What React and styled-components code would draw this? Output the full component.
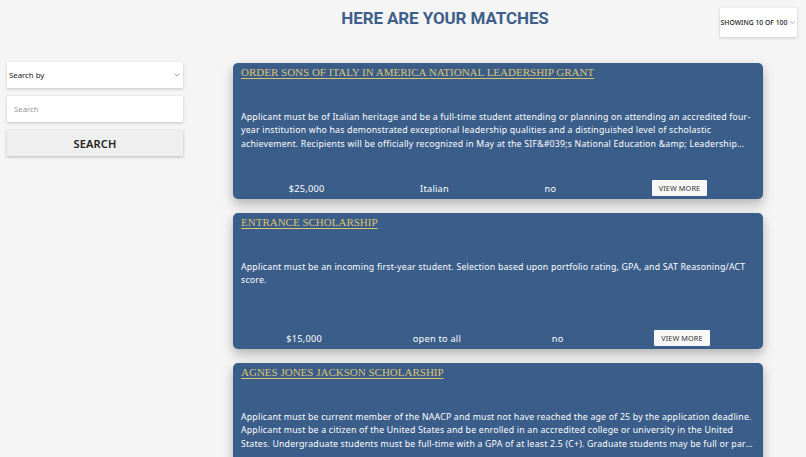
import { styled, createGlobalStyle } from "styled-components";
import { ChevronDown } from "lucide-react";

const scholarships = [
  {
    name: "ORDER SONS OF ITALY IN AMERICA NATIONAL LEADERSHIP GRANT",
    description:
      "Applicant must be of Italian heritage and be a full-time student attending or planning on attending an accredited four-year institution who has demonstrated exceptional leadership qualities and a distinguished level of scholastic achievement. Recipients will be officially recognized in May at the SIF&#039;s National Education &amp; Leadership Awards Gala in Washington, DC.",
    amount: "$25,000",
    ethnicity: "Italian",
    essay: "no",
  },
  {
    name: "ENTRANCE SCHOLARSHIP",
    description:
      "Applicant must be an incoming first-year student. Selection based upon portfolio rating, GPA, and SAT Reasoning/ACT score.",
    amount: "$15,000",
    ethnicity: "open to all",
    essay: "no",
  },
  {
    name: "AGNES JONES JACKSON SCHOLARSHIP",
    description:
      "Applicant must be current member of the NAACP and must not have reached the age of 25 by the application deadline. Applicant must be a citizen of the United States and be enrolled in an accredited college or university in the United States. Undergraduate students must be full-time with a GPA of at least 2.5 (C+). Graduate students may be full or part-time with a GPA of at least 3.0 (B).",
    amount: "$1,500",
    ethnicity: "open to all",
    essay: "yes",
  },
];

const GlobalStyle = createGlobalStyle`
  * { box-sizing: border-box; }
  body {
    margin: 0;
    background: #f5f5f5;
    font-family: "Noto Sans", "Open Sans", sans-serif;
    overflow: hidden;
  }
`;

const App = () => {
  return (
    <>
      <GlobalStyle />
      <Page>
        <Header>
          <div />
          <Title>HERE ARE YOUR MATCHES</Title>
          <ShowingBox>
            <span>SHOWING 10 OF 100</span>
            <ChevronDown size={7} strokeWidth={2} />
          </ShowingBox>
        </Header>
        <Body>
          <Sidebar>
            <SelectBox>
              <span>Search by</span>
              <ChevronDown size={8} strokeWidth={2} />
            </SelectBox>
            <SearchInput type="text" placeholder="Search" />
            <SearchButton>SEARCH</SearchButton>
          </Sidebar>
          <Results>
            {scholarships.map((s) => (
              <Card key={s.name}>
                <CardTitle href="#">{s.name}</CardTitle>
                <Description>{s.description}</Description>
                <CardFooter>
                  <span>{s.amount}</span>
                  <span>{s.ethnicity}</span>
                  <span>{s.essay}</span>
                  <ViewMore>VIEW MORE</ViewMore>
                </CardFooter>
              </Card>
            ))}
          </Results>
        </Body>
      </Page>
    </>
  );
};

export default App;

const Page = styled.div`
  width: 100%;
  min-height: 100vh;
`;

const Header = styled.div`
  display: grid;
  grid-template-columns: 190px 1fr 106px;
  align-items: start;
  height: 62px;
`;

const Title = styled.h1`
  margin: 7px 0 0;
  text-align: center;
  font-family: Roboto, "Liberation Sans", sans-serif;
  font-weight: 700;
  font-size: 17px;
  letter-spacing: -0.1px;
  line-height: 22px;
  color: #3e5f8a;
`;

const ShowingBox = styled.div`
  margin: 8px 0 0 20px;
  width: 77px;
  height: 29px;
  background: #ffffff;
  box-shadow: 0 1px 3px rgba(0, 0, 0, 0.18);
  display: flex;
  align-items: center;
  justify-content: center;
  gap: 2px;
  font-size: 6.8px;
  color: #222;
  font-weight: 500;
  & > svg {
    color: #666;
  }
`;

const Body = styled.div`
  display: grid;
  grid-template-columns: 190px 1fr;
`;

const Sidebar = styled.div`
  padding: 0 7px;
  display: flex;
  flex-direction: column;
  gap: 8px;
`;

const SelectBox = styled.div`
  height: 26px;
  background: #ffffff;
  box-shadow: 0 1px 3px rgba(0, 0, 0, 0.2);
  display: flex;
  align-items: center;
  justify-content: space-between;
  padding: 0 2px;
  font-size: 7.8px;
  color: #222;
  & > svg {
    color: #777;
  }
`;

const SearchInput = styled.input`
  height: 26px;
  border: none;
  outline: none;
  background: #ffffff;
  box-shadow: 0 1px 3px rgba(0, 0, 0, 0.2);
  padding: 0 7px;
  font-family: inherit;
  font-size: 7.8px;
  &::placeholder {
    color: #999;
  }
`;

const SearchButton = styled.button`
  height: 26px;
  border: none;
  background: #efefef;
  box-shadow: 0 1px 3px rgba(0, 0, 0, 0.25);
  font-family: inherit;
  font-weight: 600;
  font-size: 11px;
  color: #222;
  letter-spacing: 0.2px;
`;

const Results = styled.div`
  display: flex;
  flex-direction: column;
  align-items: center;
  gap: 14px;
  padding-top: 1px;
`;

const Card = styled.div`
  width: 530px;
  height: 136px;
  flex-shrink: 0;
  background: #3a5d8a;
  border-radius: 5px;
  box-shadow: 0 5px 12px rgba(0, 0, 0, 0.28);
  padding: 2px 8px 2px;
  display: flex;
  flex-direction: column;
  color: #ffffff;
`;

const CardTitle = styled.a`
  font-family: "Liberation Serif", "DejaVu Serif", serif;
  font-size: 11px;
  line-height: 14px;
  color: #dcc46f;
  text-decoration: underline;
  text-underline-offset: 1.5px;
  align-self: flex-start;
`;

const Description = styled.p`
  margin: 32px 0 0;
  font-size: 8.75px;
  letter-spacing: 0.2px;
  line-height: 13.4px;
  display: -webkit-box;
  -webkit-line-clamp: 3;
  -webkit-box-orient: vertical;
  overflow: hidden;
`;

const CardFooter = styled.div`
  margin-top: auto;
  display: flex;
  justify-content: space-around;
  align-items: center;
  height: 16px;
  margin-bottom: 1px;
  font-size: 9.2px;
  letter-spacing: 0.25px;
`;

const ViewMore = styled.button`
  height: 16px;
  padding: 0 7px;
  border: none;
  border-radius: 1px;
  background: #f7f7f7;
  color: #333;
  font-family: inherit;
  font-size: 7.3px;
  letter-spacing: 0.1px;
`;
